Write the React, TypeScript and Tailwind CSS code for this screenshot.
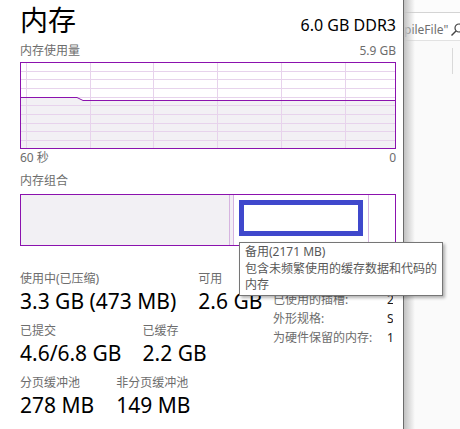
import { Fragment } from "react";

const font = { fontFamily: '"Noto Sans", "Noto Sans CJK SC", sans-serif' };

const gridX = [6, 70, 133, 197, 261, 325];
const gridY = [8.7, 17.4, 26, 34.7, 43.4, 52, 60.7, 69.4, 78];

function UsageGraph() {
  // line: 97 -> 100 around x 58..63 (relative to the graph box)
  const line = "M0 35.5 L57 35.5 L63 38.5 L376 38.5";
  return (
    <svg width="376" height="87" className="block">
      <rect x="0" y="0" width="376" height="87" fill="#ffffff" />
      <path d={`${line} L376 87 L0 87 Z`} fill="#f2f0f4" />
      {gridX.map((x) => (
        <line key={x} x1={x + 0.5} y1="0" x2={x + 0.5} y2="87" stroke="#e7d3ec" />
      ))}
      {gridY.map((y) => (
        <line key={y} x1="0" y1={Math.round(y) + 0.5} x2="376" y2={Math.round(y) + 0.5} stroke="#e7d3ec" />
      ))}
      <path d={line} fill="none" stroke="#8b12ae" strokeWidth="1" />
      <rect x="0.5" y="0.5" width="375" height="86" fill="none" stroke="#8b12ae" />
    </svg>
  );
}

function Stat({ label, value }: { label: string; value: string }) {
  return (
    <div className="flex flex-col">
      <span className="text-[12px] leading-[16px] text-[#6d6d6d] whitespace-nowrap">{label}</span>
      <span className="mt-[1px] text-[21px] leading-[26px] text-black whitespace-nowrap">{value}</span>
    </div>
  );
}

const specs = [
  ["速度:", "1600 MHz"],
  ["已使用的插槽:", "2/2"],
  ["外形规格:", "SODIMM"],
  ["为硬件保留的内存:", "126 MB"],
];

export default function App() {
  return (
    <div className="relative flex h-[429px] w-[460px] overflow-hidden bg-white" style={font}>
      {/* main panel */}
      <div className="w-[404px] shrink-0 border-r border-[#6b6b6b] bg-white pl-5 pr-[7px]">
        <div className="mt-[1px] flex items-baseline justify-between">
          <h1 className="text-[28px] leading-[36px] text-black" style={{ fontFamily: '"Noto Sans CJK SC", sans-serif' }}>
            内存
          </h1>
          <span className="text-[16px] leading-[20px] text-black">6.0 GB DDR3</span>
        </div>

        <div className="mt-[6px] flex justify-between text-[12px] leading-[16px] text-[#6d6d6d]">
          <span>内存使用量</span>
          <span>5.9 GB</span>
        </div>
        <div className="mt-[3px]">
          <UsageGraph />
        </div>
        <div className="mt-[1px] flex justify-between text-[12px] leading-[16px] text-[#6d6d6d]">
          <span>60 秒</span>
          <span>0</span>
        </div>

        <div className="mt-[7px] text-[12px] leading-[16px] text-[#6d6d6d]">内存组合</div>
        <div className="mt-[5px] flex h-[52px] border border-[#8b12ae]">
          <div className="w-[209px] border-r border-[#d6b4e0] bg-[#f2f0f4]" />
          <div className="w-[4px] border-r border-[#d6b4e0] bg-[#f3eef5]" />
          <div className="w-[135px] border-r border-[#d6b4e0] bg-white">
            <div className="ml-[5px] mt-[5px] h-[36px] w-[124px] border-[5px] border-[#3f48cc]" />
          </div>
          <div className="flex-1 bg-white" />
        </div>

        <div className="mt-[25px] flex">
          <div className="flex w-[253px] shrink-0 flex-col gap-[9px]">
            <div className="flex gap-[22px]">
              <Stat label="使用中(已压缩)" value="3.3 GB (473 MB)" />
              <Stat label="可用" value="2.6 GB" />
            </div>
            <div className="flex gap-[21px]">
              <Stat label="已提交" value="4.6/6.8 GB" />
              <Stat label="已缓存" value="2.2 GB" />
            </div>
            <div className="flex gap-[22px]">
              <Stat label="分页缓冲池" value="278 MB" />
              <Stat label="非分页缓冲池" value="149 MB" />
            </div>
          </div>
          <div className="w-[120px] overflow-hidden text-[12px] leading-[19px] whitespace-nowrap">
            {specs.map(([k, v]) => (
              <div key={k} className="grid grid-cols-[114px_auto]">
                <span className="text-[#6d6d6d]">{k}</span>
                <span className="text-[#1a1a1a]">{v}</span>
              </div>
            ))}
          </div>
        </div>
      </div>

      {/* window behind */}
      <div className="relative flex-1 overflow-hidden bg-[#fafafa]">
        <div className="h-[13px] border-b border-[#d4d4d4] bg-[#fcfcfc]" />
        <div className="flex h-[28px] items-center border-b border-[#e2e2e2] bg-white pt-[6px]">
          <span className="ml-0 whitespace-nowrap text-[12px] leading-[16px] text-[#707070]">pileFile"</span>
          <svg width="14" height="14" viewBox="0 0 14 14" className="ml-[2px] shrink-0">
            <circle cx="9" cy="5" r="4" fill="none" stroke="#444" strokeWidth="1.2" />
            <line x1="6" y1="8" x2="1.5" y2="12.5" stroke="#444" strokeWidth="1.4" />
          </svg>
        </div>
        <div className="ml-[48px] mt-[7px] h-[26px] w-px bg-[#d9d9d9]" />
        <div className="pointer-events-none absolute inset-y-0 left-0 w-[11px] bg-gradient-to-r from-[#c2c2c2] to-transparent" />
      </div>

      {/* tooltip */}
      <div className="absolute left-[239px] top-[242px] h-[54px] w-[204px] border border-[#767676] bg-white pl-[5px] pt-[1px] text-[12px] leading-[16.5px] text-[#575757] shadow-[2px_2px_3px_rgba(0,0,0,0.3)]">
        {["备用(2171 MB)", "包含未频繁使用的缓存数据和代码的", "内存"].map((t) => (
          <Fragment key={t}>
            <div className="whitespace-nowrap">{t}</div>
          </Fragment>
        ))}
      </div>
    </div>
  );
}
